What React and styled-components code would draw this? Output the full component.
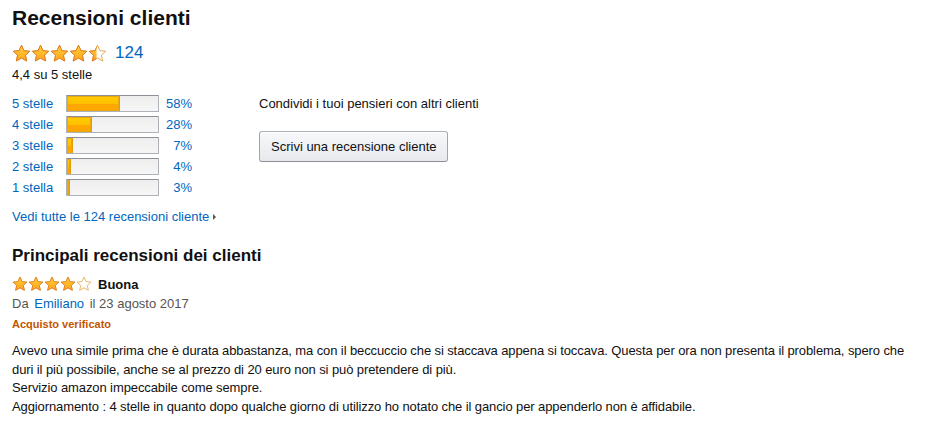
import React from "react";
import styled, { createGlobalStyle } from "styled-components";

const GlobalStyle = createGlobalStyle`
  body {
    margin: 0;
    background: #fff;
    font-family: "Liberation Sans", Arial, sans-serif;
    color: #111;
  }
`;

const histogram = [
  { label: "5 stelle", pct: 58 },
  { label: "4 stelle", pct: 28 },
  { label: "3 stelle", pct: 7 },
  { label: "2 stelle", pct: 4 },
  { label: "1 stella", pct: 3 },
];

function Star({ fill = 1, size = 18, id }) {
  const gid = `g-${id}`;
  const cid = `c-${id}`;
  const d =
    "M9 1.2 L11.3 6.3 L16.8 6.9 L12.7 10.6 L13.9 16.1 L9 13.3 L4.1 16.1 L5.3 10.6 L1.2 6.9 L6.7 6.3 Z";
  return (
    <svg width={size} height={size} viewBox="0 0 18 18">
      <defs>
        <linearGradient id={gid} x1="0" y1="0" x2="0" y2="1">
          <stop offset="0" stopColor="#ffd03b" />
          <stop offset="1" stopColor="#ffa41c" />
        </linearGradient>
        <clipPath id={cid}>
          <rect x="0" y="0" width={18 * fill} height="18" />
        </clipPath>
      </defs>
      <path d={d} fill="#fff" stroke="#e4a548" strokeWidth="0.9" strokeLinejoin="round" />
      <path
        d={d}
        fill={`url(#${gid})`}
        stroke="#de7921"
        strokeWidth="0.9"
        strokeLinejoin="round"
        clipPath={`url(#${cid})`}
      />
    </svg>
  );
}

function Stars({ rating, size, prefix }) {
  return (
    <StarRow>
      {[0, 1, 2, 3, 4].map((i) => (
        <Star
          key={i}
          id={`${prefix}${i}`}
          size={size}
          fill={Math.max(0, Math.min(1, rating - i))}
        />
      ))}
    </StarRow>
  );
}

export default function App() {
  return (
    <Page>
      <GlobalStyle />
      <Title>Recensioni clienti</Title>
      <RatingLine>
        <Stars rating={4.45} size={19} prefix="top" />
        <Count>124</Count>
      </RatingLine>
      <Average>4,4 su 5 stelle</Average>

      <Summary>
        <Histogram>
          {histogram.map((row) => (
            <HistRow key={row.label}>
              <Link>{row.label}</Link>
              <Track>
                <Fill style={{ width: `${row.pct}%` }} />
              </Track>
              <Pct>{row.pct}%</Pct>
            </HistRow>
          ))}
        </Histogram>
        <WriteBox>
          <Share>Condividi i tuoi pensieri con altri clienti</Share>
          <Button>Scrivi una recensione cliente</Button>
        </WriteBox>
      </Summary>

      <SeeAll>
        Vedi tutte le 124 recensioni cliente <Caret />
      </SeeAll>

      <SubTitle>Principali recensioni dei clienti</SubTitle>
      <ReviewHead>
        <Stars rating={4} size={16} prefix="rev" />
        <ReviewTitle>Buona</ReviewTitle>
      </ReviewHead>
      <Byline>
        Da <Author>Emiliano</Author> il 23 agosto 2017
      </Byline>
      <Verified>Acquisto verificato</Verified>
      <Body>
        Avevo una simile prima che è durata abbastanza, ma con il beccuccio che
        si staccava appena si toccava. Questa per ora non presenta il problema,
        spero che duri il più possibile, anche se al prezzo di 20 euro non si
        può pretendere di più.
        <br />
        Servizio amazon impeccabile come sempre.
        <br />
        Aggiornamento : 4 stelle in quanto dopo qualche giorno di utilizzo ho
        notato che il gancio per appenderlo non è affidabile.
      </Body>
    </Page>
  );
}

const Page = styled.div`
  padding: 5px 4px 0 12px;
  width: 929px;
  box-sizing: border-box;
`;

const Title = styled.h2`
  margin: 0;
  font-size: 21px;
  font-weight: 700;
  line-height: 26px;
`;

const StarRow = styled.span`
  display: inline-flex;
  gap: 0;
`;

const RatingLine = styled.div`
  display: flex;
  align-items: center;
  margin-top: 12px;
  gap: 8px;
`;

const Count = styled.span`
  color: #0066c0;
  font-size: 17px;
`;

const Average = styled.div`
  font-size: 13px;
  margin-top: 3px;
  line-height: 18px;
`;

const Summary = styled.div`
  display: flex;
  margin-top: 11px;
`;

const Histogram = styled.div`
  display: flex;
  flex-direction: column;
  gap: 4px;
  width: 247px;
`;

const HistRow = styled.div`
  display: grid;
  grid-template-columns: 54px 93px 33px;
  align-items: center;
  height: 17px;
`;

const Link = styled.span`
  color: #0066c0;
  font-size: 13px;
`;

const Track = styled.div`
  height: 15px;
  background: linear-gradient(#eeeeee, #f6f6f6);
  border: 1px solid #adb1b8;
  border-top-color: #8d9096;
  border-radius: 1px;
  box-sizing: content-box;
  width: 91px;
  overflow: hidden;
`;

const Fill = styled.div`
  height: 100%;
  background: linear-gradient(#ffce00, #ffc000 50%, #ffa700 51%, #ffa700);
  border-right: 1px solid #e29d0a;
  box-shadow: inset 0 0 0 1px #e8a80f;
  box-sizing: border-box;
`;

const Pct = styled.span`
  color: #0066c0;
  font-size: 13px;
  text-align: right;
`;

const WriteBox = styled.div`
  display: flex;
  flex-direction: column;
  align-items: flex-start;
`;

const Share = styled.div`
  font-size: 13px;
  line-height: 17px;
`;

const Button = styled.button`
  margin-top: 19px;
  height: 31px;
  padding: 0 11px;
  font-family: inherit;
  font-size: 13px;
  color: #111;
  background: linear-gradient(#f7f8fa, #e7e9ec);
  border: 1px solid #adb1b8;
  border-color: #adb1b8 #a2a6ac #8d9096;
  border-radius: 3px;
  box-shadow: inset 0 1px 0 rgba(255, 255, 255, 0.6);
`;

const SeeAll = styled.div`
  color: #0066c0;
  font-size: 13px;
  margin-top: 13px;
  display: flex;
  align-items: center;
  gap: 4px;
`;

const Caret = styled.span`
  display: inline-block;
  width: 0;
  height: 0;
  border-left: 3px solid #555;
  border-top: 3px solid transparent;
  border-bottom: 3px solid transparent;
`;

const SubTitle = styled.h3`
  margin: 21px 0 0;
  font-size: 17px;
  font-weight: 700;
  line-height: 22px;
`;

const ReviewHead = styled.div`
  display: flex;
  align-items: center;
  gap: 6px;
  margin-top: 8px;
  height: 18px;
`;

const ReviewTitle = styled.span`
  font-weight: 700;
  font-size: 13px;
`;

const Byline = styled.div`
  color: #555;
  font-size: 13px;
  margin-top: 1px;
  line-height: 19px;
`;

const Author = styled.span`
  color: #0066c0;
  margin: 0 2px;
`;

const Verified = styled.div`
  color: #c45500;
  font-weight: 700;
  font-size: 11px;
  margin-top: 3px;
  line-height: 16px;
`;

const Body = styled.div`
  font-size: 13px;
  line-height: 18.5px;
  margin-top: 10px;
  letter-spacing: -0.1px;
`;
